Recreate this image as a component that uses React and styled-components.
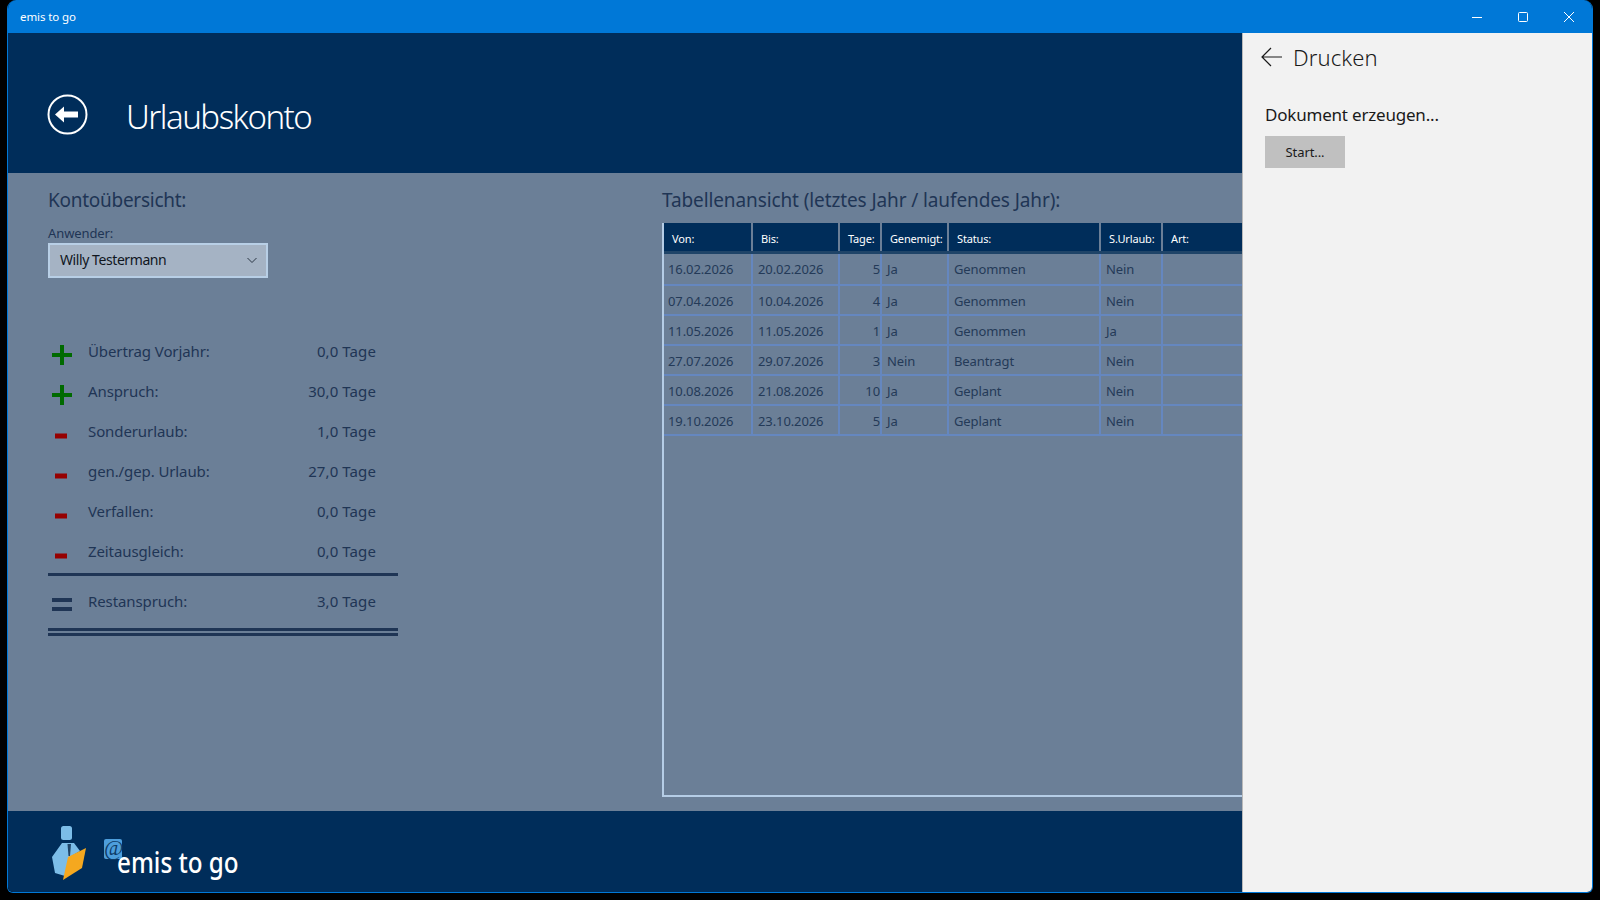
import React from "react";
import styled, { createGlobalStyle } from "styled-components";

const GlobalStyle = createGlobalStyle`
  html, body {
    margin: 0;
    padding: 0;
    background: #000;
    font-family: "Noto Sans", "Open Sans", sans-serif;
  }
  * { box-sizing: border-box; }
`;

const Screen = styled.div`
  width: 1600px;
  height: 900px;
  padding: 0 7px 7px;
  overflow: hidden;
`;

const Window = styled.div`
  height: 893px;
  display: flex;
  flex-direction: column;
  border: 1px solid #0078d7;
  border-top: 0;
  border-radius: 9px 9px 6px 6px;
  overflow: hidden;
`;

const TitleBar = styled.div`
  height: 33px;
  flex: none;
  background: #0078d7;
  color: #fff;
  display: flex;
  align-items: center;
  justify-content: space-between;
  padding: 0 18px 0 12px;
  font-size: 11.5px;
  letter-spacing: -0.1px;
`;

const Controls = styled.div`
  display: flex;
  align-items: center;
  gap: 36px;
`;

const Body = styled.div`
  flex: 1;
  min-height: 0;
  display: flex;
`;

const Main = styled.div`
  flex: 1;
  min-width: 0;
  display: flex;
  flex-direction: column;
`;

const Header = styled.header`
  height: 140px;
  flex: none;
  background: #002d5a;
  display: flex;
  align-items: center;
  gap: 38px;
  padding: 22px 0 0 39px;
  color: #fff;
`;

const PageTitle = styled.h1`
  margin: 4px 0 0;
  font-size: 33px;
  font-weight: 300;
  letter-spacing: -1.5px;
`;

const Content = styled.div`
  flex: 1;
  min-height: 0;
  background: #6b7f97;
  color: #1f3555;
  display: grid;
  grid-template-columns: 654px 1fr;
  overflow: hidden;
`;

const LeftCol = styled.section`
  padding: 14px 0 0 40px;
`;

const Heading = styled.h2`
  margin: 0;
  font-size: 19px;
  line-height: 26px;
  font-weight: 400;
  letter-spacing: ${(p) => (p.$wide ? "-0.11px" : "-0.27px")};
`;

const FieldLabel = styled.div`
  margin-top: 11px;
  font-size: 13px;
  line-height: 18px;
  letter-spacing: -0.1px;
`;

const Combo = styled.div`
  width: 220px;
  height: 35px;
  margin-top: 1px;
  border: 2px solid #b8cfe6;
  background: #a5b3c4;
  color: #10161e;
  display: flex;
  align-items: center;
  justify-content: space-between;
  padding: 0 8px 2px 10px;
  font-size: 14px;
  letter-spacing: -0.42px;
`;

const Balance = styled.div`
  width: 350px;
  margin-top: 53px;
`;

const BalanceRow = styled.div`
  height: 40px;
  margin-top: ${(p) => p.$top || 0}px;
  display: grid;
  grid-template-columns: 40px 1fr auto;
  align-items: center;
  padding-right: 22px;
  font-size: 15px;
  letter-spacing: -0.1px;
`;

const Value = styled.span`
  letter-spacing: 0.1px;
`;

const Sign = styled.svg`
  width: 20px;
  height: 20px;
  margin: 7px 0 0 4px;
`;

const Rule = styled.div`
  height: ${(p) => (p.$double ? "8px" : "3px")};
  margin-top: ${(p) => p.$top}px;
  border-top: 3px solid #1f3555;
  border-bottom: ${(p) => (p.$double ? "3px solid #1f3555" : "0")};
`;

const TableCol = styled.section`
  padding-top: 14px;
  min-width: 0;
`;

const Table = styled.div`
  margin-top: 10px;
  height: 574px;
  width: 600px;
  border-left: 2px solid #b5cde6;
  border-bottom: 2px solid #b5cde6;
  font-size: 13px;
  letter-spacing: -0.1px;
`;

const columns = "89px 87px 42px 67px 152px 62px 1fr";

const HeadRow = styled.div`
  display: grid;
  grid-template-columns: ${columns};
  height: 31px;
  background: #1f4468;
`;

const HeadCell = styled.div`
  height: 28px;
  background: #002d5a;
  color: #fff;
  font-size: 11px;
  line-height: 32px;
  letter-spacing: -0.15px;
  padding-left: 8px;
  border-right: 2px solid #6b7f97;
  margin-bottom: 3px;
  white-space: nowrap;
`;

const DataRow = styled.div`
  display: grid;
  grid-template-columns: ${columns};
  height: ${(p) => p.$h}px;
  border-bottom: 2px solid #6587bf;
  color: #243a58;
`;

const Cell = styled.div`
  border-right: 2px solid #6587bf;
  padding: 0 ${(p) => (p.$right ? "0" : "4px")} 0 ${(p) => (p.$right ? "0" : p.$first ? "4px" : "5px")};
  text-align: ${(p) => (p.$right ? "right" : "left")};
  line-height: ${(p) => p.$h - (p.$h > 30 ? 2 : 0)}px;
  white-space: nowrap;
  &:last-child { border-right: 0; }
`;

const Footer = styled.footer`
  height: 81px;
  flex: none;
  background: #002d5a;
  display: flex;
  padding: 14px 0 0 42px;
`;

const LogoMark = styled.svg`
  width: 40px;
  height: 58px;
  flex: none;
`;

const AtBadge = styled.span`
  width: 18px;
  height: 20px;
  margin: 14px 0 0 14px;
  flex: none;
  border-radius: 2px;
  background: #4d9edc;
  color: #0c3a66;
  font-family: "Liberation Serif", serif;
  font-style: italic;
  font-size: 21px;
  line-height: 19px;
  text-align: center;
`;

const Brand = styled.div`
  margin: 19px 0 0 -5px;
  color: #fff;
  font-size: 28px;
  font-weight: 500;
  line-height: 36px;
  transform: scaleX(0.865);
  transform-origin: left center;
  white-space: nowrap;
`;

const Panel = styled.aside`
  width: 350px;
  flex: none;
  background: #f2f2f2;
  border-left: 1px solid #b9b9b9;
  color: #1a1a1a;
  padding: 0 0 0 18px;
`;

const PanelHead = styled.div`
  height: 48px;
  display: flex;
  align-items: center;
  gap: 11px;
  font-size: 22px;
  font-weight: 300;
  letter-spacing: 0.1px;
`;

const PanelText = styled.div`
  margin: 22px 0 0 4px;
  font-size: 17px;
  line-height: 24px;
  letter-spacing: -0.2px;
`;

const StartButton = styled.button`
  display: block;
  width: 80px;
  height: 32px;
  margin: 9px 0 0 4px;
  border: 0;
  padding: 0;
  background: #c0c0c0;
  color: #1a1a1a;
  font: inherit;
  font-size: 13px;
  letter-spacing: -0.1px;
`;

const balance = [
  ["plus", "Übertrag Vorjahr:", "0,0 Tage"],
  ["plus", "Anspruch:", "30,0 Tage"],
  ["minus", "Sonderurlaub:", "1,0 Tage"],
  ["minus", "gen./gep. Urlaub:", "27,0 Tage"],
  ["minus", "Verfallen:", "0,0 Tage"],
  ["minus", "Zeitausgleich:", "0,0 Tage"],
];

const heads = ["Von:", "Bis:", "Tage:", "Genemigt:", "Status:", "S.Urlaub:", "Art:"];

const rows = [
  ["16.02.2026", "20.02.2026", "5", "Ja", "Genommen", "Nein", ""],
  ["07.04.2026", "10.04.2026", "4", "Ja", "Genommen", "Nein", ""],
  ["11.05.2026", "11.05.2026", "1", "Ja", "Genommen", "Ja", ""],
  ["27.07.2026", "29.07.2026", "3", "Nein", "Beantragt", "Nein", ""],
  ["10.08.2026", "21.08.2026", "10", "Ja", "Geplant", "Nein", ""],
  ["19.10.2026", "23.10.2026", "5", "Ja", "Geplant", "Nein", ""],
];

const rowHeights = [32, 30, 30, 30, 30, 30];

function SignIcon({ type }) {
  return (
    <Sign viewBox="0 0 20 20">
      {type === "plus" && <path d="M0 8h20v4H0zM8 0h4v20H8z" fill="#006a00" />}
      {type === "minus" && <rect x="3" y="8.5" width="12" height="5" fill="#960000" />}
      {type === "equals" && <path d="M0 3h20v4H0zM0 12h20v4H0z" fill="#1f3555" />}
    </Sign>
  );
}

function Logo() {
  return (
    <LogoMark viewBox="0 0 40 58">
      <rect x="11" y="1" width="11" height="14" rx="2.5" fill="#7cbde8" />
      <path d="M12 18 L2 32 L5 48 L15 51 L20 32 L30 26 L24 18 Z" fill="#7cbde8" />
      <path d="M17.5 19 L21 19 L20 31 L18.5 31 Z" fill="#1f4468" />
      <path d="M18 32 L36 23 L32 43 L13 55 Z" fill="#f5a81f" />
    </LogoMark>
  );
}

export default function App() {
  return (
    <Screen>
      <GlobalStyle />
      <Window>
        <TitleBar>
          <span>emis to go</span>
          <Controls>
            <svg width="10" height="10" viewBox="0 0 10 10">
              <path d="M0 5.5h10" stroke="#fff" fill="none" />
            </svg>
            <svg width="10" height="10" viewBox="0 0 10 10">
              <rect x="0.5" y="0.5" width="9" height="9" rx="1" stroke="#fff" fill="none" />
            </svg>
            <svg width="10" height="10" viewBox="0 0 10 10">
              <path d="M0 0l10 10M10 0L0 10" stroke="#fff" fill="none" />
            </svg>
          </Controls>
        </TitleBar>
        <Body>
          <Main>
            <Header>
              <svg width="41" height="41" viewBox="0 0 41 41">
                <circle cx="20.5" cy="20.5" r="19" fill="none" stroke="#fff" strokeWidth="2" />
                <path d="M8 20.5 L17 12.5 V17.5 H31 V23.5 H17 V28.5 Z" fill="#fff" />
              </svg>
              <PageTitle>Urlaubskonto</PageTitle>
            </Header>
            <Content>
              <LeftCol>
                <Heading>Kontoübersicht:</Heading>
                <FieldLabel>Anwender:</FieldLabel>
                <Combo>
                  <span>Willy Testermann</span>
                  <svg width="12" height="12" viewBox="0 0 12 12">
                    <path d="M1.5 4 L6 8.5 L10.5 4" fill="none" stroke="#2a3644" />
                  </svg>
                </Combo>
                <Balance>
                  {balance.map(([type, label, value]) => (
                    <BalanceRow key={label}>
                      <SignIcon type={type} />
                      <span>{label}</span>
                      <Value>{value}</Value>
                    </BalanceRow>
                  ))}
                  <Rule $top={2} />
                  <BalanceRow $top={5}>
                    <SignIcon type="equals" />
                    <span>Restanspruch:</span>
                    <Value>3,0 Tage</Value>
                  </BalanceRow>
                  <Rule $double $top={7} />
                </Balance>
              </LeftCol>
              <TableCol>
                <Heading $wide>Tabellenansicht (letztes Jahr / laufendes Jahr):</Heading>
                <Table>
                  <HeadRow>
                    {heads.map((h) => (
                      <HeadCell key={h}>{h}</HeadCell>
                    ))}
                  </HeadRow>
                  {rows.map((row, i) => (
                    <DataRow key={row[0]} $h={rowHeights[i]}>
                      {row.map((value, j) => (
                        <Cell key={j} $first={j === 0} $right={j === 2} $h={rowHeights[i]}>
                          {value}
                        </Cell>
                      ))}
                    </DataRow>
                  ))}
                </Table>
              </TableCol>
            </Content>
            <Footer>
              <Logo />
              <AtBadge>@</AtBadge>
              <Brand>emis to go</Brand>
            </Footer>
          </Main>
          <Panel>
            <PanelHead>
              <svg width="21" height="20" viewBox="0 0 21 20">
                <path d="M10 1 L1 10 L10 19 M1 10 H21" fill="none" stroke="#1a1a1a" strokeWidth="1.2" />
              </svg>
              <span>Drucken</span>
            </PanelHead>
            <PanelText>Dokument erzeugen...</PanelText>
            <StartButton>Start...</StartButton>
          </Panel>
        </Body>
      </Window>
    </Screen>
  );
}
